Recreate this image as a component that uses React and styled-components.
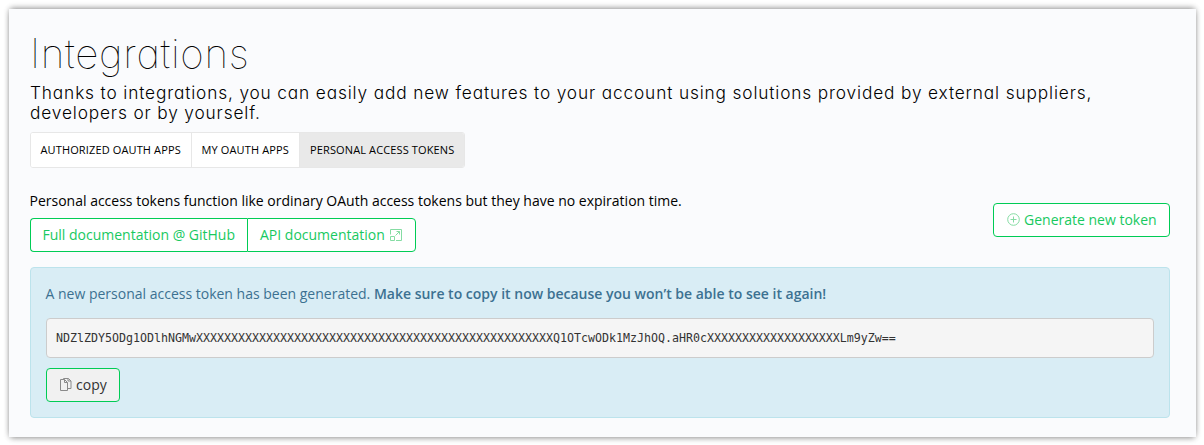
import React from "react";
import styled, { createGlobalStyle } from "styled-components";

const GlobalStyle = createGlobalStyle`
  * { box-sizing: border-box; }
  body {
    margin: 0;
    background: #fff;
    color: #000;
    font: 14px/20px "Open Sans", "Noto Sans", sans-serif;
  }
`;

const Page = styled.div`
  height: 445px;
  padding: 9px 8px 8px 9px;
  overflow: hidden;
`;

const Panel = styled.main`
  height: 428px;
  padding: 20px 26px 0 21px;
  background: #fafbfd;
  box-shadow:
    0 0 6px rgba(0, 0, 0, 0.2),
    0 3px 6px -2px rgba(0, 0, 0, 0.3),
    0 -3px 6px -2px rgba(0, 0, 0, 0.3);
`;

const Title = styled.h1`
  margin: 0;
  height: 54px;
  font: 100 40.5px/49px Inter, Lato, sans-serif;
  font-feature-settings: "cv11";
  letter-spacing: 0.65px;
  white-space: nowrap;
`;

const Lead = styled.p`
  margin: 0;
  height: 49px;
  font: 300 17.3px/20px Inter, Lato, sans-serif;
  font-feature-settings: "cv11";
  letter-spacing: 0.85px;
  white-space: nowrap;
`;

const Tabs = styled.nav`
  display: flex;
  width: 435px;
  height: 36px;
  border: 1px solid #e7e7e7;
  border-radius: 3px;
  background: #fff;
  overflow: hidden;
`;

const Tab = styled.a`
  width: ${(p) => p.$width}px;
  padding-left: ${(p) => (p.$active ? 10 : 9.5)}px;
  border-right: ${(p) => (p.$active ? "0" : "1px solid #e7e7e7")};
  background: ${(p) => (p.$active ? "#e9e9e9" : "#fff")};
  font-size: 11px;
  line-height: 34px;
  letter-spacing: 0.13px;
  white-space: nowrap;
`;

const Toolbar = styled.section`
  display: flex;
  justify-content: space-between;
  height: 99px;
  padding-top: 23px;
`;

const Intro = styled.p`
  margin: 0 0 7px -0.5px;
`;

const ButtonGroup = styled.div`
  display: flex;
`;

const Button = styled.button`
  display: flex;
  align-items: center;
  width: ${(p) => p.$width}px;
  height: 34px;
  margin: 0;
  padding: 0 0 0 12px;
  border: 1px solid #00cc55;
  border-radius: 4px;
  background: ${(p) => (p.$muted ? "#f1f1f1" : "#fff")};
  color: ${(p) => (p.$muted ? "#333" : "#18c95f")};
  font: inherit;
  white-space: nowrap;

  ${ButtonGroup} &:first-child {
    padding-left: 11.5px;
    border-right: 0;
    border-radius: 4px 0 0 4px;
  }
  ${ButtonGroup} &:last-child {
    border-radius: 0 4px 4px 0;
  }
`;

const GenerateButton = styled(Button)`
  margin-top: 12px;
`;

const Icon = styled.svg`
  flex: none;
  width: 14px;
  height: 14px;
  margin: 0 ${(p) => (p.$muted ? 3 : 4)}px 0 0;
  fill: none;
  stroke: ${(p) => (p.$muted ? "#8a8a8a" : "#85dca3")};
  stroke-width: 1;
`;

const TrailingIcon = styled(Icon)`
  margin: 0 0 0 4px;
`;

const Notice = styled.section`
  height: 151px;
  padding: 16px 15px 0;
  border: 1px solid #bce3ec;
  border-radius: 4px;
  background: #d9edf5;
  color: #3c7191;
`;

const Message = styled.p`
  margin: 0 0 14px -0.5px;
  white-space: nowrap;
`;

const Strong = styled.strong`
  font-weight: 600;
`;

const Token = styled.code`
  display: block;
  height: 40px;
  margin-bottom: 10px;
  padding-left: 9px;
  border: 1px solid #ccc;
  border-radius: 4px;
  background: #f5f5f5;
  color: #333;
  font: 11.63px/39px "DejaVu Sans Mono", monospace;
  white-space: nowrap;
`;

const token =
  "NDZlZDY5ODg1ODlhNGMw" + "X".repeat(51) + "Q1OTcwODk1MzJhOQ.aHR0c" + "X".repeat(19) + "Lm9yZw==";

export default function App() {
  return (
    <Page>
      <GlobalStyle />
      <Panel>
        <Title>Integrations</Title>
        <Lead>
          Thanks to integrations, you can easily add new features to your account using solutions provided by external suppliers,
          <br />
          developers or by yourself.
        </Lead>
        <Tabs>
          <Tab $width={161}>AUTHORIZED OAUTH APPS</Tab>
          <Tab $width={108}>MY OAUTH APPS</Tab>
          <Tab $width={164} $active>PERSONAL ACCESS TOKENS</Tab>
        </Tabs>
        <Toolbar>
          <div>
            <Intro>Personal access tokens function like ordinary OAuth access tokens but they have no expiration time.</Intro>
            <ButtonGroup>
              <Button $width={217}>Full documentation @ GitHub</Button>
              <Button $width={169}>
                API documentation
                <TrailingIcon viewBox="0 0 14 14">
                  <path d="M1.5 6.5v-5h11v11H7M1.5 8.5h4v4h-4zM6.5 7.5l4-4M7.5 3.5h3v3" />
                </TrailingIcon>
              </Button>
            </ButtonGroup>
          </div>
          <GenerateButton $width={177}>
            <Icon viewBox="0 0 14 14">
              <circle cx="7.5" cy="6.5" r="5.8" />
              <path d="M7.5 3.5v6M4.5 6.5h6" />
            </Icon>
            Generate new token
          </GenerateButton>
        </Toolbar>
        <Notice>
          <Message>
            A new personal access token has been generated.{" "}
            <Strong>Make sure to copy it now because you won’t be able to see it again!</Strong>
          </Message>
          <Token>{token}</Token>
          <Button $width={74} $muted>
            <Icon viewBox="0 0 14 14" $muted>
              <path d="M1.5 1.5h4l3 3v8h-7zM5.5 1.5v3h3M4.5 1V.5h5l2.5 2.5v7.5H9M9 .5V3h3" />
            </Icon>
            copy
          </Button>
        </Notice>
      </Panel>
    </Page>
  );
}
